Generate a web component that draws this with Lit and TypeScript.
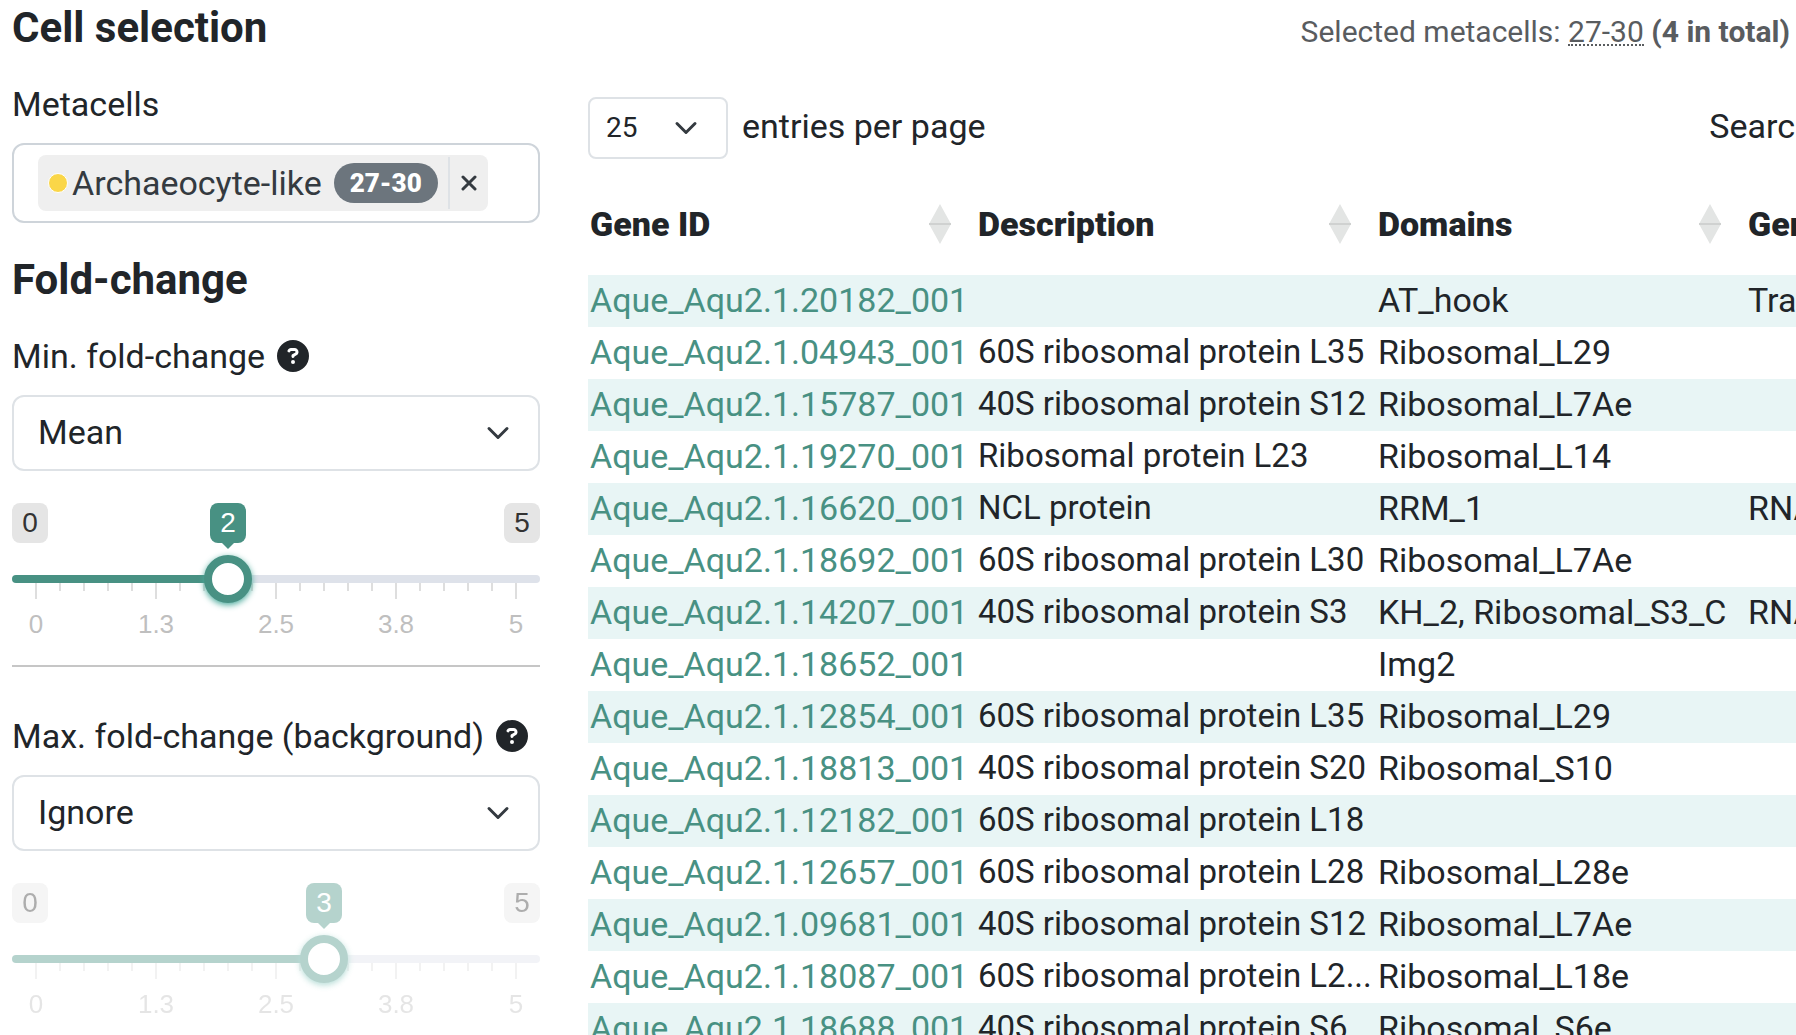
import { LitElement, html, css, nothing } from "lit";
import { customElement, property, state } from "lit/decorators.js";

const GENES: [string, string, string, string][] = [
  ["Aque_Aqu2.1.20182_001", "", "AT_hook", "Transcription"],
  ["Aque_Aqu2.1.04943_001", "60S ribosomal protein L35", "Ribosomal_L29", ""],
  ["Aque_Aqu2.1.15787_001", "40S ribosomal protein S12", "Ribosomal_L7Ae", ""],
  ["Aque_Aqu2.1.19270_001", "Ribosomal protein L23", "Ribosomal_L14", ""],
  ["Aque_Aqu2.1.16620_001", "NCL protein", "RRM_1", "RNA"],
  ["Aque_Aqu2.1.18692_001", "60S ribosomal protein L30", "Ribosomal_L7Ae", ""],
  ["Aque_Aqu2.1.14207_001", "40S ribosomal protein S3", "KH_2, Ribosomal_S3_C", "RNA"],
  ["Aque_Aqu2.1.18652_001", "", "Img2", ""],
  ["Aque_Aqu2.1.12854_001", "60S ribosomal protein L35", "Ribosomal_L29", ""],
  ["Aque_Aqu2.1.18813_001", "40S ribosomal protein S20", "Ribosomal_S10", ""],
  ["Aque_Aqu2.1.12182_001", "60S ribosomal protein L18", "", ""],
  ["Aque_Aqu2.1.12657_001", "60S ribosomal protein L28", "Ribosomal_L28e", ""],
  ["Aque_Aqu2.1.09681_001", "40S ribosomal protein S12", "Ribosomal_L7Ae", ""],
  ["Aque_Aqu2.1.18087_001", "60S ribosomal protein L2...", "Ribosomal_L18e", ""],
  ["Aque_Aqu2.1.18688_001", "40S ribosomal protein S6", "Ribosomal_S6e", ""],
];

const chevron = html`<svg class="chevron" viewBox="0 0 16 16" aria-hidden="true">
  <path d="m2 5 6 6 6-6" fill="none" stroke="#343a40" stroke-width="2" stroke-linecap="round" stroke-linejoin="round" />
</svg>`;

const helpIcon = html`<svg class="help-icon" viewBox="0 0 512 512" aria-hidden="true">
  <path
    fill="currentColor"
    d="M256 512A256 256 0 1 0 256 0a256 256 0 1 0 0 512zM169.800 165.300c7.900-22.300 29.100-37.300 52.800-37.300h58.300c34.900 0 63.100 28.300 63.100 63.100c0 22.600-12.100 43.500-31.700 54.800L280 264.400c-.2 13-10.900 23.600-24 23.600c-13.300 0-24-10.700-24-24V250.500c0-8.600 4.600-16.500 12.100-20.800l44.300-25.400c4.700-2.700 7.600-7.700 7.600-13.100c0-8.400-6.800-15.100-15.100-15.100H222.600c-3.400 0-6.400 2.100-7.500 5.300l-.4 1.200c-4.400 12.500-18.200 19-30.600 14.600s-19-18.200-14.600-30.600l.4-1.200zM224 352a32 32 0 1 1 64 0 32 32 0 1 1 -64 0z"
  />
</svg>`;

const sortIcon = html`<svg class="sort" viewBox="0 0 22 40" aria-hidden="true">
  <path d="M11 0 22 20H0zM0 20h22L11 40z" fill="#e3e5e4" />
  <path d="M0 19h22v2H0z" fill="#cfd1d0" />
</svg>`;

@customElement("range-slider")
export class RangeSlider extends LitElement {
  static styles = css`
    :host {
      display: block;
      font-family: "Liberation Sans", Arial, sans-serif;
      color: #333;
    }
    .disabled {
      opacity: 0.4;
    }
    .labels {
      display: flex;
      justify-content: space-between;
      position: relative;
      font-size: 28px;
      line-height: 40px;
    }
    .tag {
      width: 36px;
      border-radius: 8px;
      background: #e5e5e5;
      text-align: center;
    }
    .current {
      position: absolute;
      left: calc(24px + (100% - 48px) * var(--ratio));
      margin-left: -18px;
      background: #489183;
      color: #fff;
    }
    .current::after {
      content: "";
      position: absolute;
      top: 100%;
      left: 12px;
      border: 6px solid transparent;
      border-top-color: #489183;
      border-bottom: 0;
    }
    input {
      display: block;
      position: relative;
      appearance: none;
      width: 100%;
      height: 48px;
      margin: 12px 0 0;
      background: transparent;
    }
    input::-webkit-slider-runnable-track {
      height: 8px;
      border-radius: 4px;
      background: linear-gradient(#489183, #489183) no-repeat 0 0 /
        calc(24px + (100% - 48px) * var(--ratio)) 100% #dee2ea;
    }
    input::-webkit-slider-thumb {
      appearance: none;
      box-sizing: border-box;
      width: 48px;
      height: 48px;
      margin-top: -20px;
      border: 8px solid #489183;
      border-radius: 50%;
      background: #fff;
      box-shadow: 0 2px 6px #48a99a;
    }
    .ticks {
      display: flex;
      justify-content: space-between;
      height: 16px;
      margin: -20px 23px 0;
    }
    .tick {
      width: 2px;
      height: 8px;
      background: #dedede;
    }
    .tick:nth-child(5n + 1) {
      height: 16px;
    }
    .scale {
      display: flex;
      justify-content: space-between;
      font-size: 26px;
      line-height: 32px;
      margin-top: 9px;
      color: #bfbfbf;
    }
    .scale span {
      width: 48px;
      text-align: center;
    }
  `;

  @property() label = "";
  @property({ type: Number }) value = 0;
  @property({ type: Boolean }) disabled = false;

  private onInput(event: Event) {
    this.value = Number((event.target as HTMLInputElement).value);
  }

  render() {
    return html`<div class=${this.disabled ? "slider disabled" : "slider"} style="--ratio: ${this.value / 5}">
      <div class="labels">
        <span class="tag">0</span>
        <span class="tag current">${this.value}</span>
        <span class="tag">5</span>
      </div>
      <input
        type="range"
        min="0"
        max="5"
        step="0.1"
        aria-label=${this.label}
        .value=${String(this.value)}
        ?disabled=${this.disabled}
        @input=${this.onInput}
      />
      <div class="ticks">${Array.from({ length: 21 }, () => html`<span class="tick"></span>`)}</div>
      <div class="scale">${["0", "1.3", "2.5", "3.8", "5"].map((mark) => html`<span>${mark}</span>`)}</div>
    </div>`;
  }
}

@customElement("app-root")
export class AppRoot extends LitElement {
  static styles = css`
    :host {
      display: block;
      height: 100vh;
      overflow: hidden;
      background: #fff;
      color: #212529;
      font: 400 34px/48px Roboto, "Liberation Sans", sans-serif;
    }
    .page {
      display: grid;
      grid-template-columns: 66fr 151fr;
      column-gap: 48px;
      padding: 3px 0 0 12px;
    }
    .sidebar,
    .results {
      display: flex;
      flex-direction: column;
      min-width: 0;
    }
    h2 {
      margin: 1px 0 28px;
      font-size: 42px;
      line-height: 48px;
      font-weight: 700;
    }
    .field {
      display: flex;
      flex-direction: column;
      gap: 15px;
      margin-bottom: 32px;
    }
    .caption {
      display: flex;
      align-items: center;
      gap: 12px;
    }
    .help {
      display: flex;
      padding: 0;
      border: 0;
      background: none;
      color: inherit;
    }
    .help-icon {
      width: 32px;
      height: 32px;
    }
    .tokens {
      display: flex;
      padding: 10px 24px;
      border: 2px solid #ced4da;
      border-radius: 12px;
    }
    .token {
      display: flex;
      align-items: center;
      height: 56px;
      padding-left: 10px;
      border-radius: 8px;
      background: #efefef;
      color: #343a40;
    }
    .dot {
      box-sizing: border-box;
      width: 20px;
      height: 20px;
      margin-right: 4px;
      border: 1px solid #fff;
      border-radius: 50%;
      background: #fad648;
    }
    .pill {
      margin: 0 10px 0 12px;
      padding: 0 16px;
      border-radius: 20px;
      background: #6c757d;
      color: #fff;
      font-size: 26px;
      line-height: 40px;
      font-weight: 900;
    }
    .remove {
      display: flex;
      align-items: center;
      justify-content: center;
      width: 40px;
      height: 52px;
      padding: 0;
      border: 0;
      border-left: 2px solid #dee2e6;
      background: none;
    }
    .cross {
      width: 16px;
      height: 16px;
    }
    .select {
      display: grid;
      align-items: center;
    }
    .select > * {
      grid-area: 1 / 1;
    }
    select {
      appearance: none;
      width: 100%;
      height: 76px;
      padding: 0 72px 2px 24px;
      border: 2px solid #dee2e6;
      border-radius: 12px;
      background: #fff;
      color: inherit;
      font: inherit;
    }
    .chevron {
      justify-self: end;
      width: 24px;
      height: 24px;
      margin-right: 30px;
      pointer-events: none;
    }
    hr {
      width: 100%;
      margin: 25px 0 45px;
      border: 0;
      border-top: 2px solid #c6c6c6;
    }
    .summary {
      margin: 5px 6px 41px 0;
      text-align: right;
      font-size: 30px;
      color: #595c5f;
    }
    abbr {
      text-decoration: none;
      border-bottom: 2px dotted #595c5f;
      display: inline-block;
      line-height: 24px;
    }
    .controls {
      display: flex;
      align-items: center;
      justify-content: space-between;
      width: 1406px;
    }
    .length {
      display: flex;
      align-items: center;
      gap: 14px;
    }
    .length .select {
      width: 140px;
      font-size: 28px;
    }
    .length select {
      height: 62px;
      padding: 0 48px 0 16px;
      border-radius: 8px;
    }
    .controls label {
      padding-bottom: 4px;
    }
    .search {
      display: flex;
      align-items: center;
      gap: 12px;
      white-space: nowrap;
    }
    .search input {
      box-sizing: border-box;
      width: 160px;
      height: 60px;
    }
    table {
      width: 1480px;
      margin-top: 14px;
      border-collapse: collapse;
      table-layout: fixed;
      white-space: nowrap;
    }
    th,
    td {
      box-sizing: border-box;
    }
    .id {
      width: 388px;
    }
    .description {
      width: 400px;
    }
    .domains {
      width: 370px;
    }
    th {
      height: 102px;
      padding: 0 25px 0 2px;
      text-align: left;
      font-weight: 900;
    }
    .heading {
      display: flex;
      align-items: center;
      justify-content: space-between;
      width: 100%;
      padding: 0;
      border: 0;
      background: none;
      color: inherit;
      font: inherit;
    }
    .sort {
      width: 22px;
      height: 40px;
    }
    td {
      height: 52px;
      padding: 0 0 3px 2px;
    }
    td:nth-child(2) {
      font-size: 33px;
    }
    tbody tr:nth-child(odd) {
      background: #e8f5f5;
    }
    a {
      color: #489183;
      text-decoration: none;
    }
  `;

  @state() private metacells = true;

  private chip() {
    if (!this.metacells) return nothing;
    return html`<span class="token">
      <span class="dot"></span>Archaeocyte-like<span class="pill">27-30</span>
      <button class="remove" aria-label="Remove" @click=${() => (this.metacells = false)}>
        <svg class="cross" viewBox="0 0 16 16" aria-hidden="true">
          <path d="m2 2 12 12M14 2 2 14" stroke="#343a40" stroke-width="3" stroke-linecap="round" />
        </svg>
      </button>
    </span>`;
  }

  private filter(id: string, label: string, option: string) {
    return html`<div class="field">
      <div class="caption">
        <label for=${id}>${label}</label>
        <button class="help" aria-label="Help">${helpIcon}</button>
      </div>
      <div class="select">
        <select id=${id}><option>${option}</option></select>
        ${chevron}
      </div>
    </div>`;
  }

  render() {
    return html`<main class="page">
      <section class="sidebar">
        <h2>Cell selection</h2>
        <div class="field">
          <span>Metacells</span>
          <div class="tokens">${this.chip()}</div>
        </div>
        <h2>Fold-change</h2>
        ${this.filter("min", "Min. fold-change", "Mean")}
        <range-slider label="Min. fold-change" .value=${2}></range-slider>
        <hr />
        ${this.filter("max", "Max. fold-change (background)", "Ignore")}
        <range-slider label="Max. fold-change" .value=${3} disabled></range-slider>
      </section>
      <section class="results">
        <p class="summary">Selected metacells: <abbr>27-30</abbr> <b>(4 in total)</b></p>
        <div class="controls">
          <div class="length">
            <div class="select">
              <select id="length"><option>25</option></select>
              ${chevron}
            </div>
            <label for="length">entries per page</label>
          </div>
          <div class="search">
            <label for="search">Search:</label>
            <input id="search" type="search" />
          </div>
        </div>
        <table>
          <thead>
            <tr>
              <th class="id"><button class="heading">Gene ID${sortIcon}</button></th>
              <th class="description"><button class="heading">Description${sortIcon}</button></th>
              <th class="domains"><button class="heading">Domains${sortIcon}</button></th>
              <th><button class="heading">Gene names${sortIcon}</button></th>
            </tr>
          </thead>
          <tbody>
            ${GENES.map(
              ([id, description, domains, names]) => html`<tr>
                <td><a href="#${id}">${id}</a></td>
                <td>${description}</td>
                <td>${domains}</td>
                <td>${names}</td>
              </tr>`
            )}
          </tbody>
        </table>
      </section>
    </main>`;
  }
}
